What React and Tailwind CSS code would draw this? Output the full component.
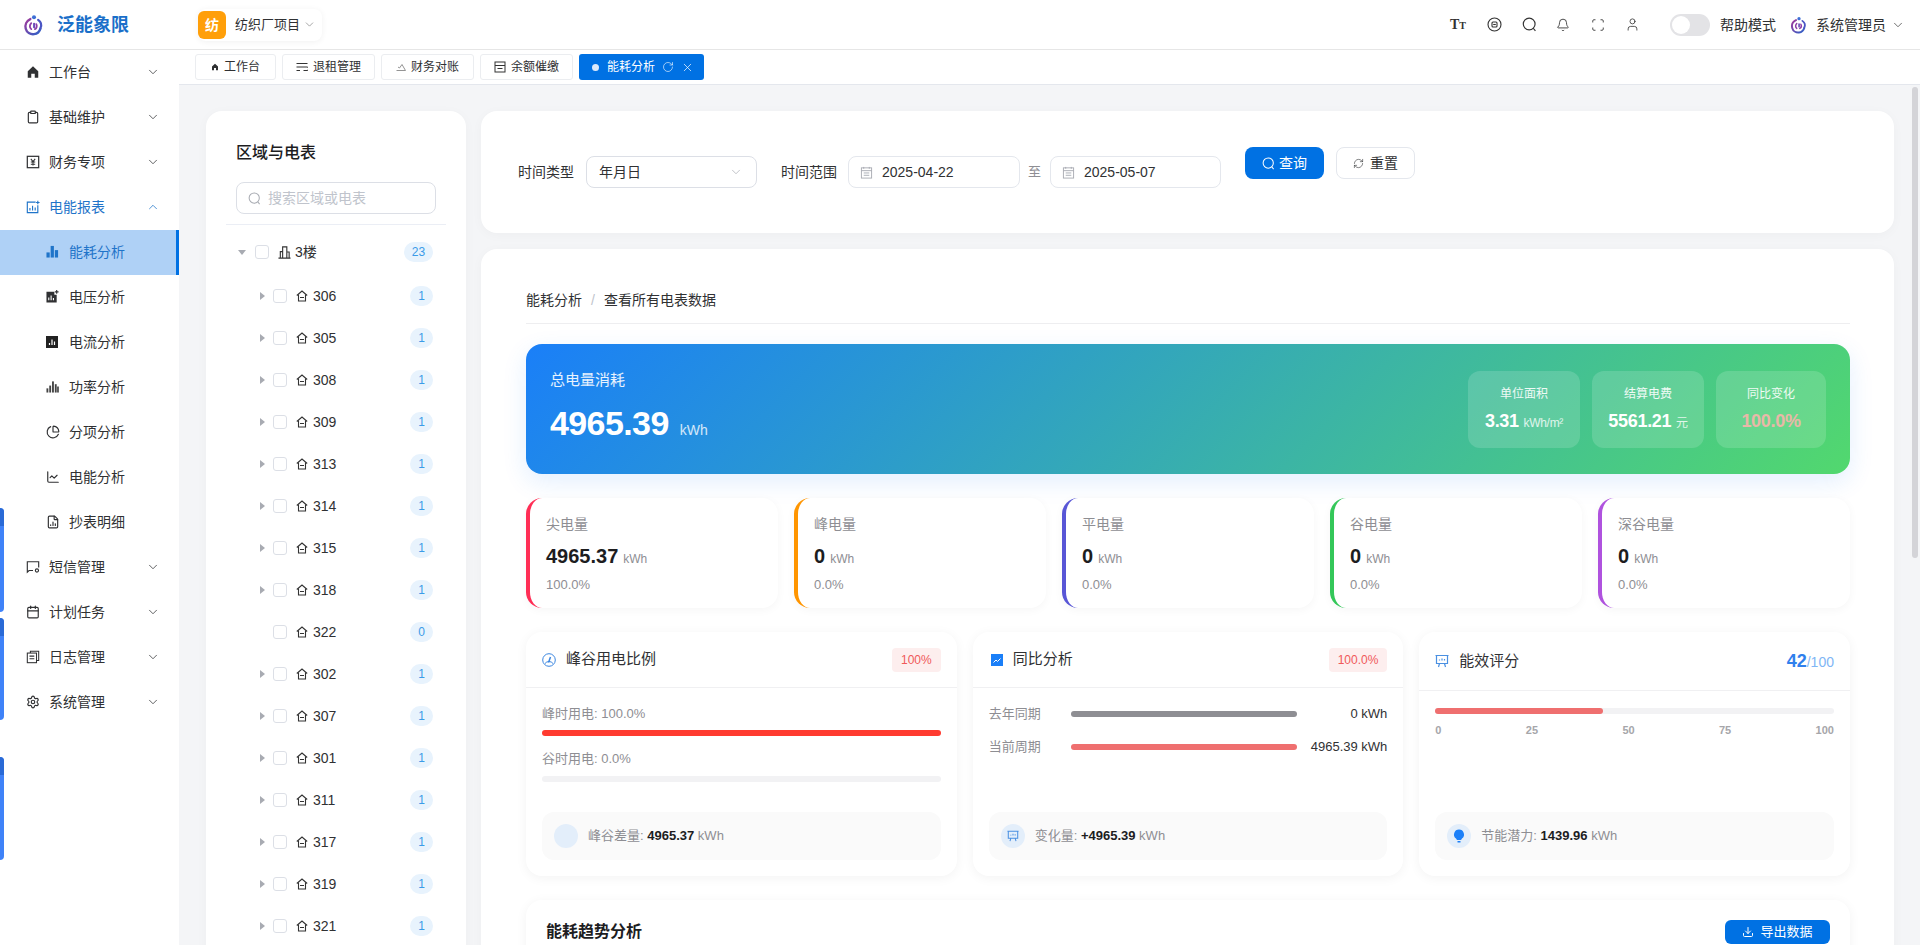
import {
  Bell, Calendar, ChartLine, ChartPie, ChevronDown, ChevronUp, Clipboard, Download, FileChartColumn,
  RefreshCw, RotateCw, Scan, Settings, User, X,
} from 'lucide-react';

const Logo = ({ size = 22 }) => (
  <svg width={size} height={size} viewBox="0 0 24 24" fill="none">
    <defs>
      <linearGradient id="lg" x1="0" y1="0" x2="1" y2="1">
        <stop offset="0" stopColor="#a0399b" />
        <stop offset="1" stopColor="#2b62c9" />
      </linearGradient>
    </defs>
    <path d="M8 5.500C3.500 7.500 2 12 3 16c1 4 5 6.500 9 6 3-.4 6-2.500 7-6" stroke="url(#lg)" strokeWidth="2.600" strokeLinecap="round" />
    <path d="M16.500 6.500c3.500 2.500 4 6 2.500 9" stroke="#4a55c4" strokeWidth="2.400" strokeLinecap="round" />
    <path d="M9 10c-2 2-2 5 0 6.500M14.500 11c1 2 .5 4.500-1.500 5.500" stroke="#8f3fa8" strokeWidth="2" strokeLinecap="round" />
    <circle cx="12" cy="3.500" r="2.200" fill="#3d6fd6" />
    <rect x="11" y="9.500" width="2.200" height="6" rx="1.100" fill="#6a4bb8" />
  </svg>
);

const HomeFill = ({ size = 14, className = '' }) => (
  <svg width={size} height={size} viewBox="0 0 16 16" className={className} fill="currentColor">
    <path d="M8 1.500 14 7v7.500h-4V10H6v4.500H2V7z" />
  </svg>
);
const FinanceIcon = () => (
  <svg width="14" height="14" viewBox="0 0 16 16" fill="none" stroke="currentColor" strokeWidth="1.400">
    <rect x="1.500" y="1.500" width="13" height="13" />
    <path d="M5.500 4.500 8 7.500l2.500-3M5.500 8h5M5.500 10.500h5M8 7.500v4.500" strokeWidth="1.200" />
  </svg>
);
const ReportIcon = () => (
  <svg width="14" height="14" viewBox="0 0 16 16" fill="none" stroke="currentColor" strokeWidth="1.300">
    <path d="M11 2.500H1.500v12h12V6" />
    <path d="M4.500 12V9M7.500 12V6.500M10.500 12V8.500" />
    <path d="M13.500 0.800v4M11.500 2.800h4" />
  </svg>
);
const BarsFill = () => (
  <svg width="13" height="13" viewBox="0 0 14 14" fill="currentColor">
    <rect x="0.500" y="8" width="3.500" height="5.500" />
    <rect x="5" y="1" width="3.500" height="12.500" />
    <rect x="9.500" y="5.500" width="3.500" height="8" />
  </svg>
);
const VoltIcon = () => (
  <svg width="13" height="13" viewBox="0 0 14 14" fill="currentColor">
    <path d="M0.500 2h8.500v3h2.500v8.500H0.500z" />
    <path d="M3 11V8M5.500 11V6M8 11V8.500" stroke="#fff" strokeWidth="1.200" />
    <path d="M11.500 0v4M9.500 2h4" stroke="currentColor" strokeWidth="1.200" />
  </svg>
);
const CurrentIcon = () => (
  <svg width="12" height="12" viewBox="0 0 12 12">
    <rect width="12" height="12" fill="#222" />
    <path d="M3.500 9V7M6 9V3.500M8.500 9V5.500" stroke="#fff" strokeWidth="1.200" />
  </svg>
);
const PowerIcon = () => (
  <svg width="13" height="13" viewBox="0 0 14 14" fill="#444">
    <rect x="0.500" y="9" width="2" height="4.500" />
    <rect x="3.500" y="6" width="2" height="7.500" />
    <rect x="6.500" y="1.500" width="2" height="12" />
    <rect x="9.500" y="4.500" width="2" height="9" />
    <rect x="12" y="7" width="1.800" height="6.500" />
  </svg>
);
const SmsIcon = () => (
  <svg width="14" height="14" viewBox="0 0 16 16" fill="none" stroke="currentColor" strokeWidth="1.300">
    <path d="M8 12H3.500L1.500 14V2h13v6.500" />
    <circle cx="12.500" cy="12" r="1.800" />
  </svg>
);
const LogIcon = () => (
  <svg width="14" height="14" viewBox="0 0 16 16" fill="none" stroke="currentColor" strokeWidth="1.200">
    <path d="M5 3.500V1.500h9.500V12H12" />
    <rect x="1.500" y="3.500" width="10.500" height="11" />
    <path d="M4 7h5.500M4 10h5.500" />
  </svg>
);
const HouseIcon = () => (
  <svg width="12" height="12" viewBox="0 0 12 12" fill="none" stroke="#333" strokeWidth="1.100" className="shrink-0">
    <path d="M0.800 5.500 6 1l5.200 4.500" />
    <path d="M2.500 4.500v6.500h7V4.500M4 7.500h4" />
  </svg>
);
const BuildingIcon = () => (
  <svg width="13" height="13" viewBox="0 0 14 14" fill="none" stroke="#333" strokeWidth="1.200" className="shrink-0">
    <path d="M0.500 13h13M2.500 13V6H5M5 13V1h4.500v12M9.500 6.500h2.500V13" />
  </svg>
);
const Caret = ({ open }) => (
  <svg width="8" height="8" viewBox="0 0 8 8" fill="#a8abb2" className="shrink-0">
    {open ? <path d="M0 2h8L4 7z" /> : <path d="M2 0v8l5-4z" />}
  </svg>
);
const SearchRing = ({ size = 14, className = '' }) => (
  <svg width={size} height={size} viewBox="0 0 14 14" fill="none" stroke="currentColor" strokeWidth="1.100" className={className}>
    <circle cx="6.700" cy="6.500" r="5.500" />
    <path d="m10.500 10.500 2 2.500" />
  </svg>
);
const CoinIcon = () => (
  <svg width="15" height="15" viewBox="0 0 15 15" fill="none" stroke="#333" strokeWidth="1.100">
    <circle cx="7.500" cy="7.500" r="6.500" />
    <rect x="5" y="5" width="5" height="5" rx="1" />
    <path d="M6.200 7.500h2.600" />
  </svg>
);
const CalendarSmall = () => (
  <svg width="13" height="13" viewBox="0 0 14 14" fill="none" stroke="#a8abb2" strokeWidth="1" className="shrink-0">
    <rect x="1.500" y="2" width="11" height="11" />
    <path d="M1.500 5h11M4 1v2M10 1v2M4 7.500h6M4 10h6" />
  </svg>
);
const BoardIcon = ({ size = 14 }) => (
  <svg width={size} height={size} viewBox="0 0 14 14" fill="none" stroke="#4a90e2" strokeWidth="1.200">
    <path d="M0.500 1.500h13M1.500 1.500V9.500h11V1.500M4.500 9.500l-1 3.500M9.500 9.500l1 3.500" />
    <path d="M4.500 6.500v-1M7 6.500v-2M9.500 6.500v-1.500" />
  </svg>
);

const menuTop = [
  { label: '工作台', icon: <HomeFill /> },
  { label: '基础维护', icon: <Clipboard size={14} /> },
  { label: '财务专项', icon: <FinanceIcon /> },
];
const subMenu = [
  { label: '电压分析', icon: <VoltIcon /> },
  { label: '电流分析', icon: <CurrentIcon /> },
  { label: '功率分析', icon: <PowerIcon /> },
  { label: '分项分析', icon: <ChartPie size={14} /> },
  { label: '电能分析', icon: <ChartLine size={14} /> },
  { label: '抄表明细', icon: <FileChartColumn size={14} /> },
];
const menuBottom = [
  { label: '短信管理', icon: <SmsIcon /> },
  { label: '计划任务', icon: <Calendar size={14} /> },
  { label: '日志管理', icon: <LogIcon /> },
  { label: '系统管理', icon: <Settings size={14} /> },
];
const rooms = ['306', '305', '308', '309', '313', '314', '315', '318', '322', '302', '307', '301', '311', '317', '319', '321'];
const stats = [
  { label: '尖电量', value: '4965.37', pct: '100.0%', border: 'border-l-[#ff2d55]' },
  { label: '峰电量', value: '0', pct: '0.0%', border: 'border-l-[#ff9500]' },
  { label: '平电量', value: '0', pct: '0.0%', border: 'border-l-[#5856d6]' },
  { label: '谷电量', value: '0', pct: '0.0%', border: 'border-l-[#34c759]' },
  { label: '深谷电量', value: '0', pct: '0.0%', border: 'border-l-[#af52de]' },
];

function MenuRow({ item }) {
  return (
    <div className="flex h-[45px] items-center pb-[2px] pl-[26px] pr-[19px] text-[#303133]">
      <span className="flex w-[23px] shrink-0">{item.icon}</span>
      <span className="flex-1 text-sm">{item.label}</span>
      <ChevronDown size={14} strokeWidth={1.3} />
    </div>
  );
}

function Sidebar() {
  return (
    <aside className="w-[179px] shrink-0 bg-white">
      {menuTop.map((m) => <MenuRow key={m.label} item={m} />)}
      <div className="flex h-[45px] items-center pb-[2px] pl-[26px] pr-[19px] text-[#1f74c9]">
        <span className="flex w-[23px] shrink-0"><ReportIcon /></span>
        <span className="flex-1 text-sm">电能报表</span>
        <ChevronUp size={14} strokeWidth={1.3} />
      </div>
      <div className="flex h-[45px] items-center border-r-[3px] border-[#0071e3] bg-[#afd1f6] pb-[2px] pl-[46px] text-[#1f74c9]">
        <span className="flex w-[23px]"><BarsFill /></span>
        <span className="text-sm">能耗分析</span>
      </div>
      {subMenu.map((m) => (
        <div key={m.label} className="flex h-[45px] items-center pb-[2px] pl-[46px] text-[#303133]">
          <span className="flex w-[23px]">{m.icon}</span>
          <span className="text-sm">{m.label}</span>
        </div>
      ))}
      {menuBottom.map((m) => <MenuRow key={m.label} item={m} />)}
    </aside>
  );
}

function Header() {
  return (
    <header className="flex h-[50px] shrink-0 items-center border-b border-[#e6e6e6] bg-white">
      <div className="flex w-[198px] shrink-0 items-center pl-[23px]">
        <Logo />
        <span className="ml-[12px] text-lg font-bold text-[#1a6fc9]">泛能象限</span>
      </div>
      <div className="flex h-[32px] items-center rounded-lg pr-[6px] shadow-[0_1px_6px_rgba(0,0,0,0.06)]">
        <span className="flex h-[28px] w-[28px] items-center justify-center rounded-md bg-[#ff9f0a] text-sm font-bold text-white">纺</span>
        <span className="ml-[9px] text-[13px] text-[#303133]">纺织厂项目</span>
        <ChevronDown size={13} strokeWidth={1.2} className="ml-[3px] text-[#777]" />
      </div>
      <div className="ml-auto flex items-center text-[#333]">
        <span className="mr-[21px] font-['Liberation_Serif'] text-[14px] font-bold leading-none">T<span className="text-[10px]">T</span></span>
        <span className="mr-[20px]"><CoinIcon /></span>
        <SearchRing size={15} className="mr-[19px]" />
        <Bell size={14} className="mr-[21px]" strokeWidth={1.5} />
        <Scan size={14} className="mr-[20px]" strokeWidth={1.5} />
        <User size={15} className="mr-[30px]" strokeWidth={1.3} />
        <div className="flex h-[22px] w-[40px] items-center rounded-full bg-[#e3e3e6] p-[2px]">
          <span className="h-[18px] w-[18px] rounded-full bg-white" />
        </div>
        <span className="ml-[10px] text-sm text-[#303133]">帮助模式</span>
        <span className="ml-[14px] flex"><Logo size={18} /></span>
        <span className="ml-[8px] text-sm text-[#303133]">系统管理员</span>
        <ChevronDown size={14} strokeWidth={1.2} className="ml-[5px] mr-[15px]" />
      </div>
    </header>
  );
}

function Tab({ width, icon, label }) {
  return (
    <div className={`flex h-[26px] ${width} items-center justify-center gap-[5px] rounded-[3px] border border-[#ebedf0] text-xs text-[#303133]`}>
      {icon}
      <span>{label}</span>
    </div>
  );
}

function TabBar() {
  return (
    <div className="flex h-[35px] shrink-0 items-center gap-[6px] border-b border-[#e4e7ed] bg-white pl-[16px]">
      <Tab width="w-[81px]" icon={<HomeFill size={8} />} label="工作台" />
      <Tab width="w-[93px]" label="退租管理" icon={
        <svg width="12" height="10" viewBox="0 0 12 10" fill="none" stroke="#333" strokeWidth="1"><path d="M0.500 1.500h11M0.500 5h10.500a1.500 1.500 0 0 1 0 3.500H7.500M0.500 8.500H4" /></svg>
      } />
      <Tab width="w-[93px]" label="财务对账" icon={
        <svg width="10" height="8" viewBox="0 0 10 8" fill="none" stroke="#888" strokeWidth="0.900"><path d="M0.500 7.500h9L6 1.500 3.500 5 2 4" /></svg>
      } />
      <Tab width="w-[93px]" label="余额催缴" icon={
        <svg width="12" height="12" viewBox="0 0 12 12" fill="none" stroke="#333" strokeWidth="1"><rect x="1" y="1" width="10" height="10" /><path d="M1 4.500h10M3.500 7.500h5" /></svg>
      } />
      <div className="flex h-[26px] w-[125px] items-center rounded-[3px] bg-[#0071e3] pl-[13px] text-xs text-white">
        <span className="h-[7px] w-[7px] rounded-full bg-[#dceafb]" />
        <span className="ml-[8px]">能耗分析</span>
        <RotateCw size={12} strokeWidth={1.2} className="ml-[7px]" />
        <X size={13} strokeWidth={1.3} className="ml-[7px]" />
      </div>
    </div>
  );
}

function TreeRow({ name }) {
  const empty = name === '322';
  return (
    <div className="flex h-[42px] items-center pl-[52px] pr-[33px]">
      <span className="flex w-[15px] shrink-0">{!empty && <Caret />}</span>
      <span className="h-[14px] w-[14px] shrink-0 rounded-[3px] border border-[#dcdfe6]" />
      <span className="ml-[9px]"><HouseIcon /></span>
      <span className="ml-[5px] flex-1 text-sm text-[#303133]">{name}</span>
      <span className="flex h-[20px] w-[23px] items-center justify-center rounded-full bg-[#e8f3fd] text-xs text-[#3b9be8]">{empty ? 0 : 1}</span>
    </div>
  );
}

function TreePanel() {
  return (
    <section className="w-[260px] shrink-0 self-start rounded-2xl bg-white pb-10 shadow-[0_2px_12px_rgba(0,0,0,0.03)]">
      <h2 className="pl-[30px] pt-[30px] text-base font-medium leading-6 text-[#1d1d1f]">区域与电表</h2>
      <div className="mx-[30px] mt-[17px] flex h-[32px] items-center rounded-lg border border-[#dcdfe6] pl-[11px] text-[#a8abb2]">
        <SearchRing size={13} />
        <span className="ml-[7px] text-sm text-[#c0c4cc]">搜索区域或电表</span>
      </div>
      <div className="mx-[20px] mt-[10px] border-b border-[#ebeef5]" />
      <div className="mt-[6px] flex h-[42px] items-center pl-[32px] pr-[33px]">
        <span className="flex w-[17px] shrink-0"><Caret open /></span>
        <span className="h-[14px] w-[14px] shrink-0 rounded-[3px] border border-[#dcdfe6]" />
        <span className="ml-[9px]"><BuildingIcon /></span>
        <span className="ml-[4px] flex-1 text-sm text-[#303133]">3楼</span>
        <span className="flex h-[20px] w-[29px] items-center justify-center rounded-full bg-[#e8f3fd] text-xs text-[#3b9be8]">23</span>
      </div>
      <div className="mt-[2px]">
        {rooms.map((r) => <TreeRow key={r} name={r} />)}
      </div>
    </section>
  );
}

function DateInput({ value, width }) {
  return (
    <div className={`flex h-[32px] ${width} items-center rounded-lg border border-[#e4e7ed] pl-[11px]`}>
      <CalendarSmall />
      <span className="ml-[9px] text-sm text-[#303133]">{value}</span>
    </div>
  );
}

function FilterCard() {
  return (
    <section className="flex h-[122px] shrink-0 items-start rounded-2xl bg-white pl-[37px] pt-[36px] shadow-[0_2px_12px_rgba(0,0,0,0.03)]">
      <div className="mt-[9px] flex items-center">
        <span className="text-sm text-[#303133]">时间类型</span>
        <div className="ml-[12px] flex h-[32px] w-[171px] items-center justify-between rounded-lg border border-[#dcdfe6] pl-[12px] pr-[13px]">
          <span className="text-sm text-[#303133]">年月日</span>
          <ChevronDown size={14} strokeWidth={1.2} className="text-[#a8abb2]" />
        </div>
        <span className="ml-[24px] text-sm text-[#303133]">时间范围</span>
        <span className="ml-[11px]"><DateInput value="2025-04-22" width="w-[172px]" /></span>
        <span className="ml-[8px] mr-[9px] text-[13px] text-[#8e8e93]">至</span>
        <DateInput value="2025-05-07" width="w-[171px]" />
      </div>
      <div className="ml-[24px] flex h-[32px] w-[79px] items-center justify-center gap-[4px] rounded-lg bg-[#0071e3] text-sm text-white">
        <SearchRing size={13} />
        <span>查询</span>
      </div>
      <div className="ml-[12px] flex h-[32px] w-[79px] items-center justify-center gap-[6px] rounded-lg border border-[#e4e7ed] text-sm text-[#303133]">
        <RefreshCw size={11} strokeWidth={1.3} />
        <span>重置</span>
      </div>
    </section>
  );
}

function Hero() {
  return (
    <div className="mt-5 flex h-[130px] items-center justify-between rounded-2xl bg-[linear-gradient(135deg,#1a7ff8,#52d86e)] pl-[24px] pr-[24px] text-white shadow-[0_8px_24px_rgba(26,127,248,0.12)]">
      <div className="pb-[3px]">
        <div className="text-[15px] leading-5 text-white/90">总电量消耗</div>
        <div className="mt-[11px] flex items-baseline">
          <span className="text-[34px] font-bold leading-[44px] tracking-[-0.6px]">4965.39</span>
          <span className="ml-[11px] text-sm text-white/80">kWh</span>
        </div>
      </div>
      <div className="flex gap-3">
        <div className="flex h-[77px] w-[112px] flex-col items-center justify-center rounded-xl bg-white/15">
          <span className="text-xs text-white/90">单位面积</span>
          <span className="mt-[7px] text-lg font-bold leading-6 tracking-[-0.3px]">3.31 <span className="text-xs font-normal text-white/80">kWh/m²</span></span>
        </div>
        <div className="flex h-[77px] w-[112px] flex-col items-center justify-center rounded-xl bg-white/15">
          <span className="text-xs text-white/90">结算电费</span>
          <span className="mt-[7px] text-lg font-bold leading-6 tracking-[-0.3px]">5561.21 <span className="text-xs font-normal text-white/80">元</span></span>
        </div>
        <div className="flex h-[77px] w-[110px] flex-col items-center justify-center rounded-xl bg-white/15">
          <span className="text-xs text-white/90">同比变化</span>
          <span className="mt-[7px] text-lg font-bold leading-6 tracking-[-0.3px] text-[#e9b8a8]">100.0%</span>
        </div>
      </div>
    </div>
  );
}

function StatCard({ stat }) {
  return (
    <div className={`h-[110px] rounded-2xl border-l-4 ${stat.border} bg-white pl-[16px] pt-[16px] shadow-[0_2px_10px_rgba(0,0,0,0.04)]`}>
      <div className="text-sm leading-5 text-[#8e8e93]">{stat.label}</div>
      <div className="mt-[8px] flex items-baseline leading-6">
        <span className="text-xl font-bold text-[#1d1d1f]">{stat.value}</span>
        <span className="ml-[5px] text-xs text-[#8e8e93]">kWh</span>
      </div>
      <div className="mt-[5px] text-[13px] leading-5 text-[#8e8e93]">{stat.pct}</div>
    </div>
  );
}

function CardHead({ icon, title, right, tall }) {
  return (
    <div className={`flex ${tall ? 'h-[59px]' : 'h-[56px]'} items-center justify-between border-b border-[#f0f0f2] px-4`}>
      <div className="flex items-center gap-[10px]">
        {icon}
        <span className="text-[15px] text-[#303133]">{title}</span>
      </div>
      {right}
    </div>
  );
}

function Badge({ children }) {
  return <span className="flex h-[24px] items-center rounded bg-[#fdeeee] px-[9px] text-xs text-[#f0595a]">{children}</span>;
}

function FootNote({ icon, label, value }) {
  return (
    <div className="mx-4 mt-auto mb-4 flex h-[48px] items-center rounded-xl bg-[#fafafa] pb-[1px] pl-3 text-[13px]">
      <span className="flex h-[24px] w-[24px] items-center justify-center rounded-full bg-[#e3eefa]">{icon}</span>
      <span className="ml-[10px] text-[#8e8e93]">{label}: <b className="font-bold text-[#1d1d1f]">{value}</b> kWh</span>
    </div>
  );
}

function PeakCard() {
  return (
    <div className="flex h-[244px] flex-col rounded-2xl bg-white shadow-[0_2px_12px_rgba(0,0,0,0.05)]">
      <CardHead
        title="峰谷用电比例"
        right={<Badge>100%</Badge>}
        icon={
          <svg width="14" height="14" viewBox="0 0 14 14" fill="none" stroke="#3b86e0" strokeWidth="1"><circle cx="7" cy="7" r="6.300" /><path d="M3 10.500a5 5 0 0 1 8 0" /><path d="M8.500 4 6.500 9.500" strokeWidth="1.500" /></svg>
        }
      />
      <div className="px-4 pt-[16px]">
        <div className="text-[13px] leading-5 text-[#8e8e93]">峰时用电: 100.0%</div>
        <div className="mt-[6px] h-[6px] rounded-full bg-[#ff3b30]" />
        <div className="mt-[13px] text-[13px] leading-5 text-[#8e8e93]">谷时用电: 0.0%</div>
        <div className="mt-[7px] h-[6px] rounded-full bg-[#f2f2f4]" />
      </div>
      <FootNote icon={null} label="峰谷差量" value="4965.37" />
    </div>
  );
}

function YoyCard() {
  return (
    <div className="flex h-[244px] flex-col rounded-2xl bg-white shadow-[0_2px_12px_rgba(0,0,0,0.05)]">
      <CardHead
        title="同比分析"
        right={<Badge>100.0%</Badge>}
        icon={
          <svg width="12" height="12" viewBox="0 0 12 12" className="ml-[2px]"><rect width="12" height="12" fill="#1a7ff8" /><path d="M2.500 8.500 5 6l1.500 1.500L9.500 4.500" stroke="#fff" strokeWidth="1" fill="none" /></svg>
        }
      />
      <div className="px-4 pt-[16px] text-[13px]">
        <div className="flex h-[20px] items-center">
          <span className="w-[82px] shrink-0 text-[#8e8e93]">去年同期</span>
          <div className="h-[6px] w-[226px] rounded-full bg-[#8e8e93]" />
          <span className="ml-auto text-[#303133]">0 kWh</span>
        </div>
        <div className="mt-[13px] flex h-[20px] items-center">
          <span className="w-[82px] shrink-0 text-[#8e8e93]">当前周期</span>
          <div className="h-[6px] w-[226px] rounded-full bg-[#ef6f6f]" />
          <span className="ml-auto text-[#303133]">4965.39 kWh</span>
        </div>
      </div>
      <FootNote icon={<BoardIcon size={12} />} label="变化量" value="+4965.39" />
    </div>
  );
}

function ScoreCard() {
  return (
    <div className="flex h-[244px] flex-col rounded-2xl bg-white shadow-[0_2px_12px_rgba(0,0,0,0.05)]">
      <CardHead
        tall
        title="能效评分"
        icon={<BoardIcon />}
        right={
          <span className="text-[#2f80ed]">
            <b className="text-lg font-bold">42</b>
            <span className="text-sm text-[#7fb6f5]">/100</span>
          </span>
        }
      />
      <div className="px-4 pt-[17px]">
        <div className="h-[6px] rounded-full bg-[#f2f2f4]">
          <div className="h-[6px] w-[42%] rounded-full bg-[#ef6f6f]" />
        </div>
        <div className="mt-[8px] flex justify-between text-[11px] font-bold leading-4 text-[#a6a6aa]">
          <span>0</span><span>25</span><span>50</span><span>75</span><span>100</span>
        </div>
      </div>
      <FootNote
        label="节能潜力"
        value="1439.96"
        icon={
          <svg width="12" height="14" viewBox="0 0 12 14" fill="#1a7ff8"><path d="M6 0.500a5 5 0 0 1 3 9L8 11H4L3 9.500a5 5 0 0 1 3-9z" /><rect x="4.500" y="12" width="3" height="1.500" /></svg>
        }
      />
    </div>
  );
}

export default function App() {
  return (
    <div className="relative flex h-[945px] w-full flex-col overflow-hidden bg-white font-['Liberation_Sans','Noto_Sans_CJK_SC',sans-serif]">
      <Header />
      <div className="flex min-h-0 flex-1">
        <Sidebar />
        <main className="relative flex min-w-0 flex-1 flex-col shadow-[inset_1px_0_0_#e8e8ec]">
          <TabBar />
          <div className="flex min-h-0 flex-1 gap-[15px] overflow-hidden bg-[#f4f5f7] pl-[27px] pr-[26px] pt-[26px]">
            <TreePanel />
            <div className="flex min-w-0 flex-1 flex-col gap-4">
              <FilterCard />
              <section className="flex-1 rounded-2xl bg-white pl-[45px] pr-[44px] pt-[41px] shadow-[0_2px_12px_rgba(0,0,0,0.03)]">
                <div className="flex items-center border-b border-[#eeeeF0] pb-[13px] text-sm leading-5 text-[#303133]">
                  <span>能耗分析</span>
                  <span className="mx-[9px] text-[#c0c4cc]">/</span>
                  <span>查看所有电表数据</span>
                </div>
                <Hero />
                <div className="mt-6 grid grid-cols-5 gap-4">
                  {stats.map((s) => <StatCard key={s.label} stat={s} />)}
                </div>
                <div className="mt-6 grid grid-cols-3 gap-4">
                  <PeakCard />
                  <YoyCard />
                  <ScoreCard />
                </div>
                <div className="mt-6 flex h-[100px] items-start justify-between rounded-2xl bg-white pl-[20px] pr-[20px] pt-[20px] shadow-[0_2px_12px_rgba(0,0,0,0.05)]">
                  <span className="text-base font-bold leading-6 text-[#1d1d1f]">能耗趋势分析</span>
                  <div className="flex h-[24px] w-[105px] items-center justify-center gap-[6px] rounded-md bg-[#0071e3] text-[13px] text-white">
                    <Download size={12} />
                    <span>导出数据</span>
                  </div>
                </div>
              </section>
            </div>
          </div>
          <div className="absolute right-[2px] top-[37px] h-[471px] w-[6px] rounded-full bg-[#d4d4d8]" />
        </main>
      </div>
      <div className="absolute left-0 top-[508px] h-[104px] w-[4px] overflow-hidden rounded-r-lg bg-[#3f82f8]"><div className="h-[18px] bg-[#2a6ad6]" /></div>
      <div className="absolute left-0 top-[618px] h-[102px] w-[4px] overflow-hidden rounded-r-lg bg-[#3f82f8]"><div className="h-[18px] bg-[#2a6ad6]" /></div>
      <div className="absolute left-0 top-[757px] h-[103px] w-[4px] overflow-hidden rounded-r-lg bg-[#3f82f8]"><div className="h-[18px] bg-[#2a6ad6]" /></div>
    </div>
  );
}
